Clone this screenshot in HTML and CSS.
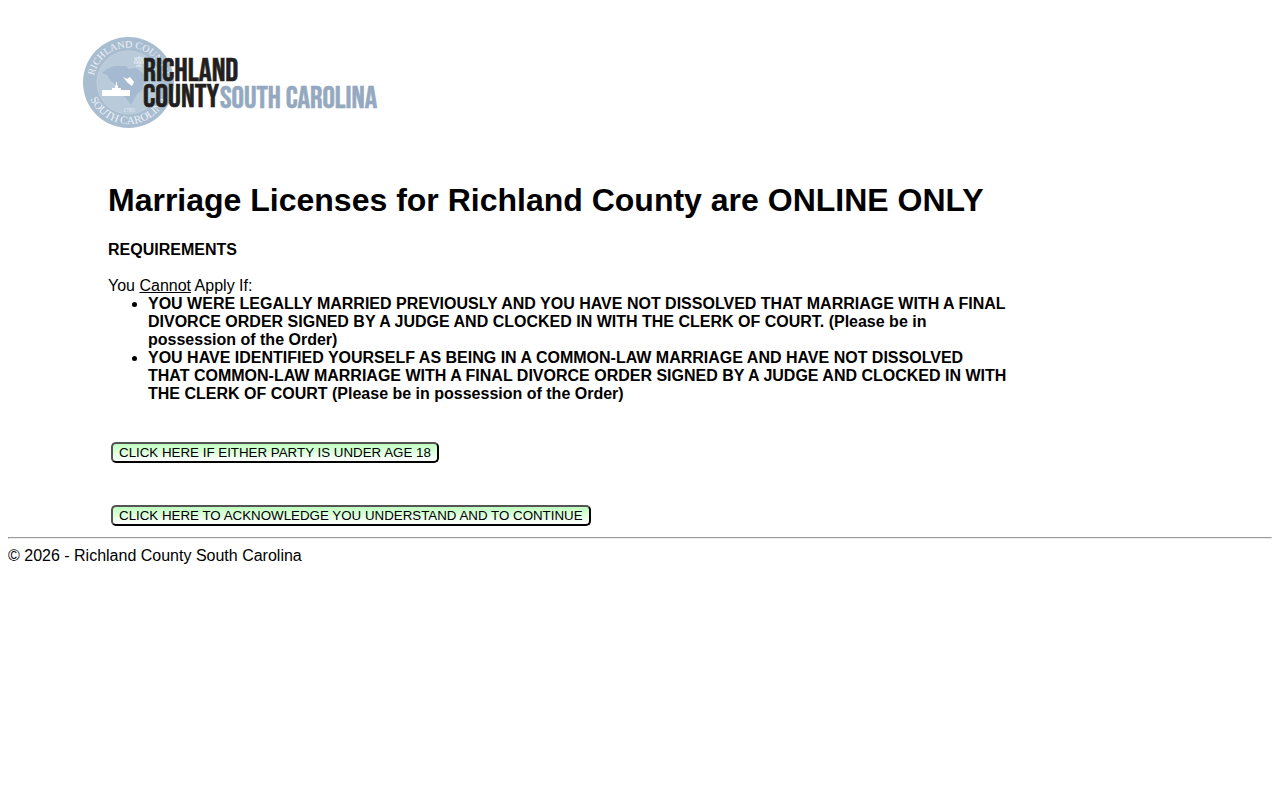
FILE: index.html
```html
<!DOCTYPE html>
<html lang="en">
<head>
<meta charset="utf-8">
<title>Marriage Licenses - Richland County</title>
<link rel="stylesheet" href="styles.css">
</head>
<body>
<header class="site-header">
<svg class="logo" viewBox="0 0 300 94" role="img" aria-label="Richland County South Carolina">
  <defs>
    <path id="arc-top" d="M10.5 46.500A35 35 0 0 1 80.500 46.500"/>
    <path id="arc-bottom" d="M4 46.500A41.500 41.500 0 0 0 87 46.500"/>
  </defs>
  <circle cx="45.500" cy="46.500" r="45.500" fill="#a9bdd1"/>
  <circle cx="45.500" cy="46.500" r="31.500" fill="#b9cadb" stroke="#c3d1df"/>
  <path d="M19 37L24 33L31 30L43 30L46 33L53 32L66 42L61 47L59 54L54 58L48 69L43 62L37 56L34 50L27 44L24 39Z" fill="#a5bad0"/>
  <text class="seal-text"><textPath href="#arc-top" startOffset="50%" text-anchor="middle">RICHLAND COUNTY</textPath></text>
  <text class="seal-text seal-text-lower"><textPath href="#arc-bottom" startOffset="50%" text-anchor="middle">SOUTH CAROLINA</textPath></text>
  <path d="M19 60V54H29V52H32V50L33 49V46H34V49L35 50V52H38V54H47V60Z" fill="#fff"/>
  <path d="M40 41L44 43L47 41L51 46L49 50L46 48L44 46Z" fill="#fff"/>
  <path d="M51 22H61M56 20V30M53 30H59M53 23L51 27H55ZM59 23L57 27H61Z" fill="none" stroke="#e5ecf3"/>
  <text class="seal-year" x="46" y="76" text-anchor="middle">1785</text>
  <text class="brand brand-dark" x="60" y="45">RICHLAND</text>
  <text class="brand brand-dark" x="60" y="71">COUNTY</text>
  <text class="brand brand-blue" x="137" y="72">SOUTH CAROLINA</text>
</svg>
</header>
<main class="content">
  <h1 class="title">Marriage Licenses for Richland County are ONLINE ONLY</h1>
  <p class="subtitle">REQUIREMENTS</p>
  <p class="intro">You <u>Cannot</u> Apply If:</p>
  <ul class="rules">
    <li>YOU WERE LEGALLY MARRIED PREVIOUSLY AND YOU HAVE NOT DISSOLVED THAT MARRIAGE WITH A FINAL DIVORCE ORDER SIGNED BY A JUDGE AND CLOCKED IN WITH THE CLERK OF COURT. (Please be in possession of the Order)</li>
    <li>YOU HAVE IDENTIFIED YOURSELF AS BEING IN A COMMON-LAW MARRIAGE AND HAVE NOT DISSOLVED THAT COMMON-LAW MARRIAGE WITH A FINAL DIVORCE ORDER SIGNED BY A JUDGE AND CLOCKED IN WITH THE CLERK OF COURT (Please be in possession of the Order)</li>
  </ul>
  <div class="actions">
    <button class="action" type="button">CLICK HERE IF EITHER PARTY IS UNDER AGE 18</button>
    <button class="action" type="button">CLICK HERE TO ACKNOWLEDGE YOU UNDERSTAND AND TO CONTINUE</button>
  </div>
</main>
<hr class="rule">
<footer>© 2026 - Richland County South Carolina</footer>
</body>
</html>
```
FILE: styles.css
```css
body {
  margin: 8px;
  font-family: "Liberation Sans", Arial, sans-serif;
  font-size: 16px;
  line-height: 18px;
  color: #000;
  background: #fff;
}

.site-header {
  padding: 28px 0 0 75px;
}

.logo {
  display: block;
  width: 300px;
  height: 94px;
}

.brand {
  font-family: "Bebas Neue", "Roboto Condensed", Roboto, sans-serif;
  font-weight: 400;
}

.brand-dark {
  fill: #231f20;
  stroke: #231f20;
  stroke-width: 0.6;
  font-size: 32px;
}

.brand-blue {
  fill: #94a9c0;
  stroke: #94a9c0;
  stroke-width: 0.6;
  font-size: 31px;
}

.seal-text {
  font-family: "Liberation Serif", serif;
  font-size: 10px;
  fill: #edf2f7;
}

.seal-text-lower {
  font-size: 11px;
}

.seal-year {
  font-family: "Liberation Serif", serif;
  font-size: 6px;
  fill: #e5ecf3;
}

.content {
  max-width: 900px;
  padding: 52px 0 0 100px;
}

.title {
  margin: 0 0 22px;
  font-size: 32px;
  line-height: 37px;
}

.subtitle {
  margin: 0 0 18px;
  font-weight: 700;
}

.intro {
  margin: 0;
}

.rules {
  margin: 0;
  padding-left: 40px;
  font-weight: 700;
}

.actions {
  display: flex;
  flex-direction: column;
  align-items: flex-start;
  gap: 42px;
  padding: 39px 3px 0;
}

.action {
  padding: 1px 6px;
  border: 2px outset #000;
  border-radius: 5px;
  background: linear-gradient(to bottom, #bfffbf, #fff);
  color: #000;
  font-family: inherit;
  font-size: 13.3333px;
  line-height: 15px;
}

.rule {
  margin: 11px 0 8px;
}
```
